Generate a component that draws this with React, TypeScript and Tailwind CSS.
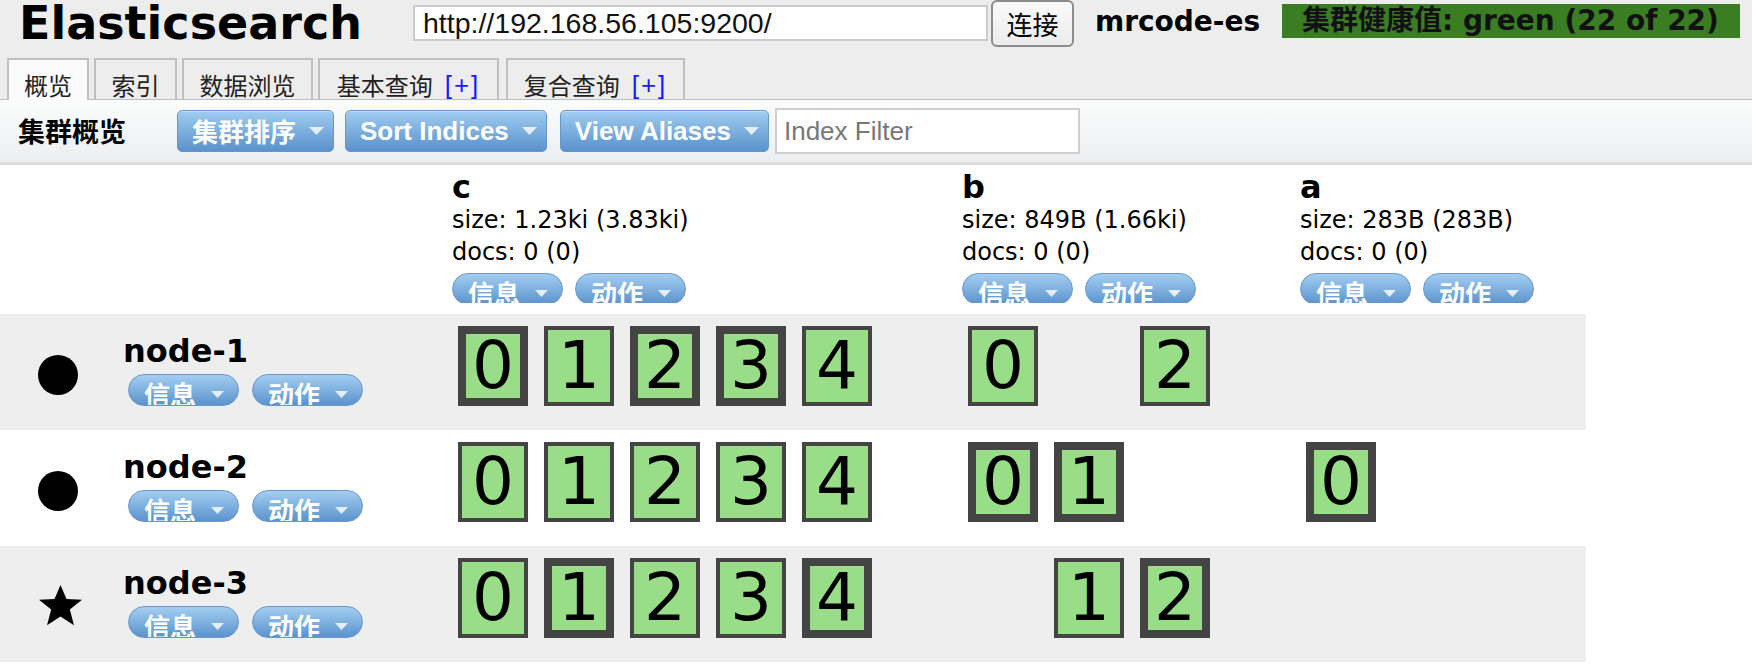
import React from 'react';

type Kind = 'P' | 'R' | null;

const indices = [
    { name: 'c', size: '1.23ki (3.83ki)', docs: '0 (0)' },
    { name: 'b', size: '849B (1.66ki)', docs: '0 (0)' },
    { name: 'a', size: '283B (283B)', docs: '0 (0)' },
];

const nodes: { name: string; star?: boolean; shards: Kind[][] }[] = [
    { name: 'node-1', shards: [['P', 'R', 'P', 'P', 'R'], ['R', null, 'R'], [null]] },
    { name: 'node-2', shards: [['R', 'R', 'R', 'R', 'R'], ['P', 'P', null], ['P']] },
    { name: 'node-3', star: true, shards: [['R', 'P', 'R', 'R', 'P'], [null, 'R', 'P'], [null]] },
];

const cjk = "font-['DejaVu_Sans','Noto_Sans_CJK_SC',sans-serif]";

function Caret({ w = 15, h = 8 }: { w?: number; h?: number }) {
    return (
        <svg width={w} height={h} viewBox="0 0 15 8" className="shrink-0">
            <polygon points="0,0 15,0 7.5,8" fill="#ffffff" fillOpacity="0.8" />
        </svg>
    );
}

function ToolButton({ label, latin }: { label: string; latin?: boolean }) {
    return (
        <div className="shrink-0 h-[42px] flex items-center gap-[13px] pl-[14px] pr-[9px] rounded-[5px] border border-[#6796cd] bg-linear-to-b from-[#a0ccf0] to-[#5a92cc] shadow-[inset_0_1px_0_rgba(255,255,255,0.35)]">
            <span
                className={`text-[26px] font-bold text-white leading-[30px] ${latin ? "font-['Liberation_Sans','Noto_Sans_CJK_SC',sans-serif]" : "font-['Noto_Sans_CJK_SC',sans-serif]"}`}
            >
                {label}
            </span>
            <Caret />
        </div>
    );
}

// small pill button; the label sits low and is cut by the pill's edge, as in the original
function Pill({ label }: { label: string }) {
    return (
        <div className="shrink-0 w-[111px] h-[32px] rounded-full border border-[#6a97cd] bg-linear-to-b from-[#a4cef1] to-[#5b93cd] overflow-hidden">
            <div className="h-[32px] mt-[3px] flex items-center gap-[15px] pl-[15px]">
                <span className="text-[26px] leading-[26px] font-bold text-white font-['Noto_Sans_CJK_SC',sans-serif]">
                    {label}
                </span>
                <Caret w={13} h={7} />
            </div>
        </div>
    );
}

function Shard({ n, kind }: { n: number; kind: Kind }) {
    if (!kind) return <div className="w-[70px] h-[80px] shrink-0" />;
    return (
        <div
            className={`shrink-0 w-[70px] h-[80px] bg-[#99dd88] border-[#444444] flex items-center justify-center ${kind === 'P' ? 'border-[8px]' : 'border-[4px]'}`}
        >
            <span className="text-[66px] leading-none text-black font-['DejaVu_Sans',sans-serif]">{n}</span>
        </div>
    );
}

function Star() {
    return (
        <svg width="45" height="43" viewBox="0 0 24 23">
            <polygon
                points="12,0.5 15.2,8 23.5,8.4 17,13.6 19.2,22 12,17.4 4.8,22 7,13.6 0.5,8.4 8.8,8"
                fill="#000"
            />
        </svg>
    );
}

export default function App() {
    return (
        <div className={`w-[1752px] h-[664px] overflow-hidden bg-white text-black ${cjk}`}>
            {/* top bar */}
            <div className="bg-[#ededed]">
                <div className="h-[58px] flex items-start">
                    <div className="shrink-0 w-[413px] pl-[19px]">
                        <h1 className="text-[46px] leading-[46px] font-bold font-['DejaVu_Sans',sans-serif]">Elasticsearch</h1>
                    </div>
                    <div className="shrink-0 w-[575px] h-[36px] mt-[5px] bg-white border-2 border-[#cbcbcb] flex items-center pl-[8px] text-[28.5px] text-[#111] font-['Liberation_Sans',sans-serif] whitespace-nowrap">
                        http://192.168.56.105:9200/
                    </div>
                    <div className="shrink-0 ml-[3px] w-[83px] h-[47px] rounded-[6px] border-2 border-[#8c8c8c] bg-linear-to-b from-[#fafafa] to-[#ececec] flex items-center justify-center text-[26px] font-['Noto_Sans_CJK_SC',sans-serif]">
                        连接
                    </div>
                    <div className="shrink-0 w-[208px] pl-[21px] mt-[5px] text-[28px] leading-[34px] font-bold font-['DejaVu_Sans',sans-serif]">
                        mrcode-es
                    </div>
                    <div className="shrink-0 w-[458px] h-[34px] mt-[4px] bg-[#3b7d23] pl-[20px] text-[28px] leading-[34px] font-bold text-[#111] whitespace-nowrap">
                        集群健康值: green (22 of 22)
                    </div>
                </div>
                <div className="h-[41px] flex items-end pl-[7px] gap-[5px]">
                    {[
                        { t: '概览', w: 'w-[82px]', active: true },
                        { t: '索引', w: 'w-[83px]' },
                        { t: '数据浏览', w: 'w-[131px]' },
                        { t: '基本查询', w: 'w-[181px]', plus: true },
                        { t: '复合查询', w: 'w-[179px] ml-[2px]', plus: true },
                    ].map((tab) => (
                        <div
                            key={tab.t}
                            className={`${tab.w} shrink-0 flex justify-center pt-[11px] border-2 border-b-0 border-[#c0c0c0] text-[24px] leading-[28px] text-[#222] font-['Noto_Sans_CJK_SC',sans-serif] ${tab.active ? 'h-[42px] -mb-[1px] relative z-10 bg-[#fbfbfb]' : 'h-[41px] bg-[#ededed]'}`}
                        >
                            <span>{tab.t}</span>
                            {tab.plus && (
                                <span className="ml-[12px] text-[#1a1aff] tracking-[2px] font-['Liberation_Sans',sans-serif] text-[26px]">[+]</span>
                            )}
                        </div>
                    ))}
                </div>
            </div>

            {/* toolbar */}
            <div className="h-[66px] border-t border-[#bdbdbd] border-b-[3px] border-b-[#dcdcdc] bg-linear-to-b from-[#fbfcfc] to-[#eceef0] flex items-center pl-[18px]">
                <div className="shrink-0 w-[159px] text-[27px] font-bold font-['Noto_Sans_CJK_SC',sans-serif]">集群概览</div>
                <ToolButton label="集群排序" />
                <div className="ml-[11px]">
                    <ToolButton label="Sort Indices" latin />
                </div>
                <div className="ml-[13px]">
                    <ToolButton label="View Aliases" latin />
                </div>
                <div className="shrink-0 ml-[6px] w-[305px] h-[46px] bg-white border-2 border-[#cfcfcf] flex items-center pl-[7px] text-[26px] text-[#777] font-['Liberation_Sans',sans-serif]">
                    Index Filter
                </div>
            </div>

            {/* cluster view */}
            <div className="w-[1586px]">
                <div className="grid grid-cols-[446px_510px_338px_292px] h-[149px]">
                    <div />
                    {indices.map((ix) => (
                        <div key={ix.name} className="pl-[6px] pt-[6px] font-['DejaVu_Sans',sans-serif]">
                            <div className="text-[32px] leading-[33px] font-bold">{ix.name}</div>
                            <div className="text-[24px] leading-[32px]">size: {ix.size}</div>
                            <div className="text-[24px] leading-[32px]">docs: {ix.docs}</div>
                            <div className="flex gap-[12px] mt-[5px] h-[30px] overflow-hidden">
                                <Pill label="信息" />
                                <Pill label="动作" />
                            </div>
                        </div>
                    ))}
                </div>

                {nodes.map((node, i) => (
                    <div
                        key={node.name}
                        className={`grid grid-cols-[446px_510px_338px_292px] h-[116px] ${i % 2 === 0 ? 'bg-[#eeeeee]' : 'bg-white'}`}
                    >
                        <div className="flex">
                            <div className="w-[123px] pl-[38px] flex items-start">
                                {node.star ? (
                                    <div className="mt-[38px]">
                                        <Star />
                                    </div>
                                ) : (
                                    <div className="mt-[41px] w-[40px] h-[40px] rounded-full bg-black" />
                                )}
                            </div>
                            <div className="pt-[20px]">
                                <div className="text-[32px] leading-[34px] font-bold font-['DejaVu_Sans',sans-serif]">{node.name}</div>
                                <div className="flex gap-[13px] mt-[6px] ml-[5px]">
                                    <Pill label="信息" />
                                    <Pill label="动作" />
                                </div>
                            </div>
                        </div>
                        {node.shards.map((col, ci) => (
                            <div key={ci} className="pl-[12px] pt-[12px] flex gap-[16px] items-start">
                                {col.map((k, si) => (
                                    <Shard key={si} n={si} kind={k} />
                                ))}
                            </div>
                        ))}
                    </div>
                ))}
            </div>
        </div>
    );
}
